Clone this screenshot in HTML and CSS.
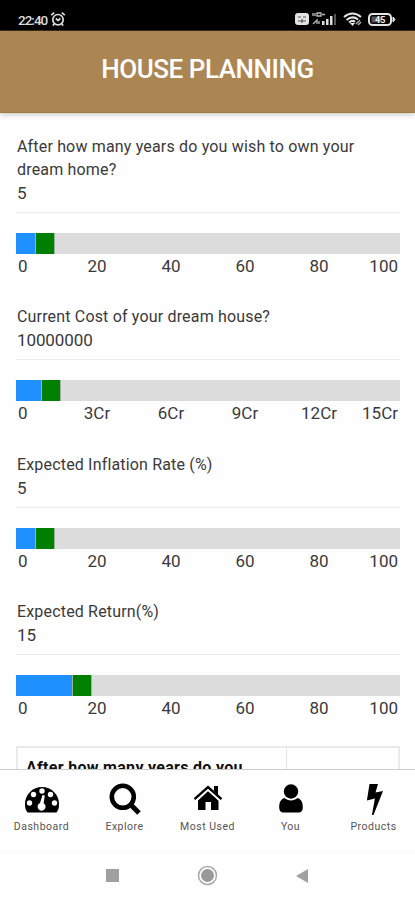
FILE: index.html
```html
<!DOCTYPE html>
<html lang="en">
<head>
<meta charset="utf-8">
<meta name="viewport" content="width=device-width, initial-scale=1">
<title>House Planning</title>
<link rel="stylesheet" href="styles.css">
</head>
<body>
<div class="status">
  <span class="clock">22:40</span>
  <svg class="alarm" width="16" height="16" viewBox="0 0 16 16" fill="none" stroke="#ddd" stroke-width="1.7"><circle cx="8" cy="8.7" r="5.2"/><path d="M1.2 4.2 4.2 1.6M14.8 4.2 11.8 1.6M5.8 7.3 8 9.5l2.4-2.2M4.2 13l-1.4 1.6M11.8 13l1.4 1.6"/></svg>
  <svg class="tray" width="102" height="16" viewBox="0 0 102 16">
    <rect x="0" y="2" width="14" height="12" rx="3" fill="#e4e4e4"/>
    <path d="M3 6h3M8 6h3M3 10h8M7 8v4" stroke="#555" stroke-width="1.2"/>
    <path d="M18 2v3M20 2v3M22 2h4v3h-4zM27 3.500h3M18 13l4-4v4M24 13v-3" fill="none" stroke="#bbb" stroke-width="1.3"/>
    <path d="M27 10h2.500v4H27zM31 8h2.500v6H31zM35 5h2.500v9H35z" fill="#ddd"/><path d="M39 3h2v11h-2z" fill="#555"/>
    <path d="M49 6Q57.500-1 66 6M51.500 9Q57.500 4 63 8.500M54 11.500Q57.500 8.500 60 11" fill="none" stroke="#e4e4e4" stroke-width="2"/>
    <path d="m55 12 2.500 3 2.500-3z" fill="#eee"/><path d="m61 13 4-4M63 14l3-3" stroke="#aaa" stroke-width="1.500"/>
    <rect x="74" y="3" width="22" height="11" rx="3.500" fill="none" stroke="#e4e4e4" stroke-width="2"/>
    <path d="M98 6l2 2.500-2 2.500z" stroke="#e4e4e4" fill="#e4e4e4"/><rect x="76.500" y="5.500" width="10" height="6" fill="#555"/>
    <text x="80" y="12" class="charge">45</text>
  </svg>
</div>
<header class="header"><h1>HOUSE PLANNING</h1></header>
<main class="content">
  <section class="field">
    <p class="question">After how many years do you wish to own your<br>dream home?</p>
    <p class="value">5</p>
    <div class="track"><i class="fill" style="width:19px"></i><i class="thumb"></i></div>
    <div class="scale"><span>0</span><span>20</span><span>40</span><span>60</span><span>80</span><span>100</span></div>
  </section>
  <section class="field">
    <p class="question">Current Cost of your dream house?</p>
    <p class="value">10000000</p>
    <div class="track"><i class="fill" style="width:25px"></i><i class="thumb"></i></div>
    <div class="scale"><span>0</span><span>3Cr</span><span>6Cr</span><span>9Cr</span><span>12Cr</span><span>15Cr</span></div>
  </section>
  <section class="field">
    <p class="question">Expected Inflation Rate (%)</p>
    <p class="value">5</p>
    <div class="track"><i class="fill" style="width:19px"></i><i class="thumb"></i></div>
    <div class="scale"><span>0</span><span>20</span><span>40</span><span>60</span><span>80</span><span>100</span></div>
  </section>
  <section class="field">
    <p class="question">Expected Return(%)</p>
    <p class="value">15</p>
    <div class="track"><i class="fill" style="width:55.5px"></i><i class="thumb"></i></div>
    <div class="scale"><span>0</span><span>20</span><span>40</span><span>60</span><span>80</span><span>100</span></div>
  </section>
  <div class="summary"><div class="term">After how many years do you</div><div class="result"></div></div>
</main>
<nav class="tabs">
  <a class="tab"><svg width="36" height="34" viewBox="0 0 36 34"><path d="M3.500 30.500C1.500 28 1 25.500 1 22a17 17 0 0 1 34 0c0 3.500-.5 6-2.500 8.500z"/><g fill="#fff"><circle cx="5.500" cy="21" r="2.700"/><circle cx="9.500" cy="12.500" r="2.700"/><circle cx="18" cy="9" r="2.700"/><circle cx="26.500" cy="12.500" r="2.700"/><circle cx="30.500" cy="21" r="2.700"/><path d="m18.500 13 2.300.5-1.200 7.700a4 4 0 1 1-3.600-.2z"/></g></svg><span>Dashboard</span></a>
  <a class="tab"><svg width="36" height="34" viewBox="0 0 36 34"><circle cx="15.800" cy="14.800" r="11" fill="none" stroke="#000" stroke-width="4.600"/><path d="m23.500 22.500 8.500 8.500" stroke="#000" stroke-width="5"/></svg><span>Explore</span></a>
  <a class="tab"><svg width="36" height="34" viewBox="0 0 36 34"><path d="M8 18.500 18 9l10.500 9.500V28H21v-8h-5.500v8H8zM24 4h4v9l-4-4z"/><path d="M4.500 17.200 18 5.200l13.500 12" fill="none" stroke="#000" stroke-width="2.400"/><path d="M7 18.600 18 8.600l11 10" fill="none" stroke="#fff" stroke-width=".9"/></svg><span>Most Used</span></a>
  <a class="tab"><svg width="36" height="34" viewBox="0 0 36 34"><circle cx="18" cy="9.500" r="7.200"/><path d="M11.500 16c3.500 3.200 9.500 3.200 13 0 3.800 1 5.300 4.500 5.300 9.500 0 3.200-1.600 5-4.300 5h-15c-2.700 0-4.300-1.800-4.300-5 0-5 1.500-8.500 5.300-9.500z"/></svg><span>You</span></a>
  <a class="tab"><svg width="36" height="34" viewBox="0 0 36 34"><path d="M13.500 2H22l-2.500 8.500L27 9l-9.500 24h-1.600l3-16.500-8 2z"/></svg><span>Products</span></a>
</nav>
<footer class="system">
  <svg width="415" height="41" viewBox="0 0 415 41"><path fill="#a0a0a0" d="M106 11h13v13h-13zM308 11v14l-12-7z"/><circle cx="207.500" cy="17.500" r="9" fill="none" stroke="#aaa" stroke-width="1.500"/><circle cx="207.500" cy="17.500" r="6.500" fill="#999"/></svg>
</footer>
</body>
</html>
```
FILE: styles.css
```css
* { box-sizing: border-box; }
body {
  margin: 0;
  height: 900px;
  overflow: hidden;
  display: flex;
  flex-direction: column;
  background: #fefefe;
  color: #3a3a3a;
  font-family: Roboto, "Liberation Sans", sans-serif;
}
.status {
  flex: 0 0 31px;
  display: flex;
  align-items: center;
  padding: 8px 18px 0;
  background: #000;
  border-bottom: 1px solid #3b3021;
}
.clock { width: 32px; padding-top: 1px; font-size: 13.5px; font-weight: 500; letter-spacing: -1px; color: #ddd; }
.tray { margin-left: auto; }
.charge { font-size: 9px; font-weight: 700; fill: #eee; }
.header {
  flex: 0 0 82px;
  background: #ab8653;
  border-bottom: 1px solid #a17c40;
  box-shadow: 0 1px 6px rgba(0, 0, 0, .25);
}
h1 {
  margin: 0;
  padding-top: 20px;
  text-align: center;
  color: #fff;
  font-size: 26px;
  line-height: 36px;
  font-weight: 500;
  letter-spacing: -.45px;
}
.content { flex: 0 0 656px; overflow: hidden; padding: 22px 15px 0 16px; }
.field { padding-bottom: 28.3px; }
p { margin: 0; }
.question { padding-left: 1px; line-height: 23px; font-size: 16px; letter-spacing: .17px; white-space: nowrap; }
.value {
  height: 32px;
  padding: 1px 0 0 1px;
  line-height: 23px;
  font-size: 17px;
  letter-spacing: -.1px;
  border-bottom: 1px solid #ececec;
}
.track { display: flex; height: 21px; margin-top: 20px; background: #dcdcdc; }
.fill { background: #1e90ff; }
.thumb { width: 20px; background: #008000; border: solid #9db39d; border-width: 0 1px; }
.scale {
  display: grid;
  grid-template-columns: 44px repeat(4, 74px) 1fr;
  padding: 2px 2px 0 0;
  font-size: 17px;
  line-height: 21px;
  text-align: center;
}
.scale span:first-child { text-align: left; padding-left: 2px; }
.scale span:last-child { text-align: right; }
.summary {
  display: grid;
  grid-template-columns: 269px 1fr;
  height: 60px;
  margin-top: -1.5px;
  border: 2px solid #eaeaea;
}
.term {
  padding: 8px 8px;
  border-right: 1px solid #e5e5e5;
  font-size: 16px;
  line-height: 23px;
  font-weight: 700;
  letter-spacing: .3px;
  color: #111;
  white-space: nowrap;
}
.tabs {
  flex: 0 0 82px;
  display: grid;
  grid-template-columns: repeat(5, 83px);
  border-top: 1px solid #ccc;
  padding-top: 12px;
}
.tab { display: flex; flex-direction: column; align-items: center; }
.tab span { margin-top: 4px; font-size: 10.5px; line-height: 14px; letter-spacing: .5px; color: #555; white-space: nowrap; }
.system { flex: 1; border-top: 1px solid #f7f7f7; padding-top: 6px; }
.system svg { display: block; }
```
